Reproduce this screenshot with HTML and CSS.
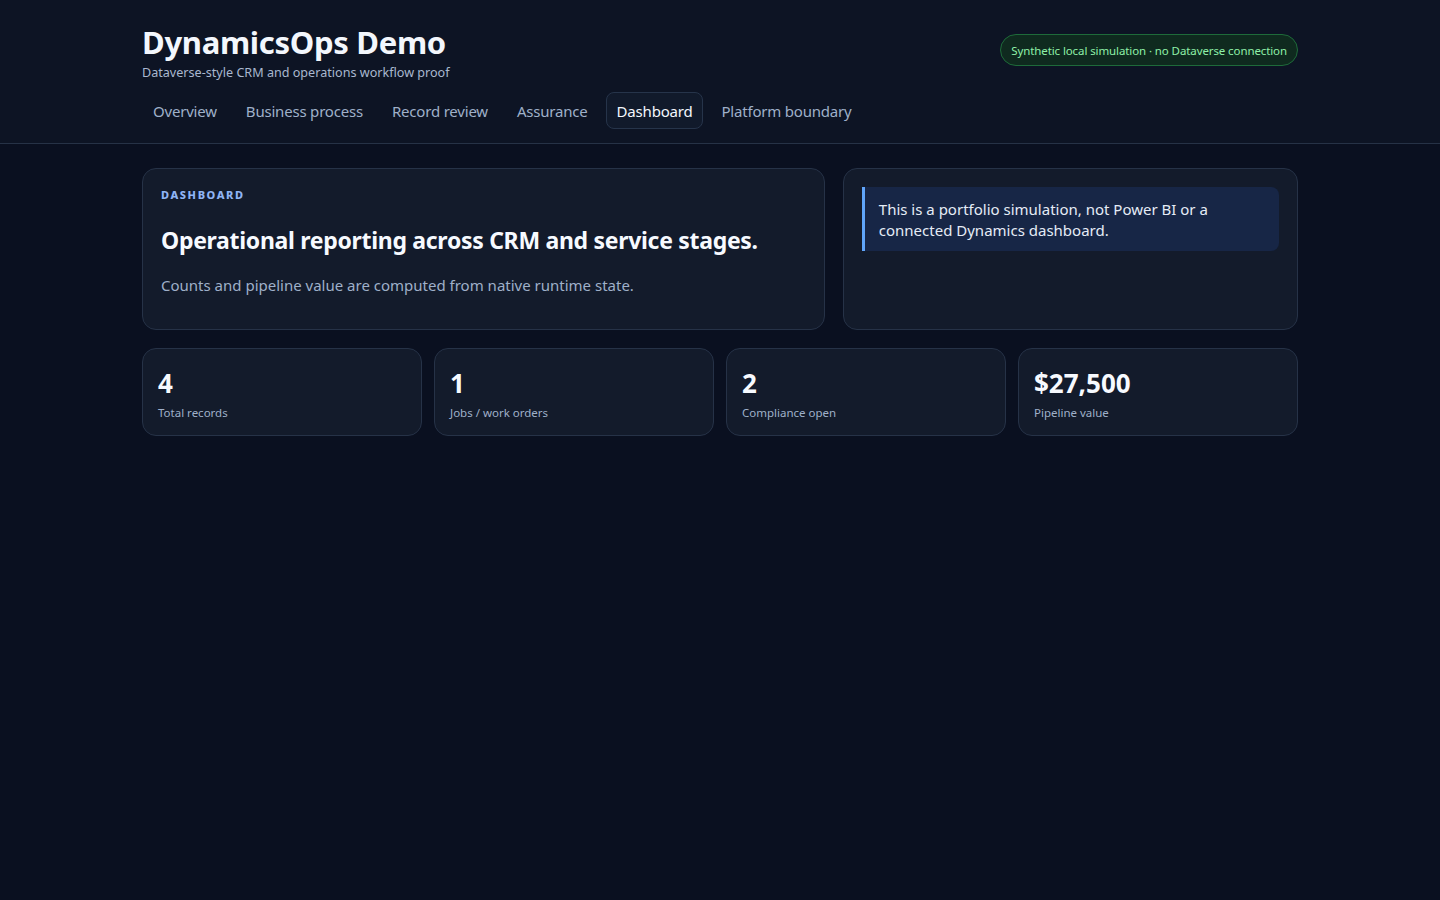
FILE: index.html
```html
<!DOCTYPE html>
<html lang="en">

<head>
  <meta charset="UTF-8">
  <meta name="viewport" content="width=device-width, initial-scale=1.0">
  <title>DynamicsOps Demo</title>
  <link rel="stylesheet" href="styles.css">
</head>

<body>
  <!-- header -->
  <header class="topbar">
    <div class="wrap">
      <div class="brand-row">
        <div class="brand">
          <h1 class="brand-title">DynamicsOps Demo</h1>
          <p class="brand-sub">Dataverse-style CRM and operations workflow proof</p>
        </div>
        <span class="badge">Synthetic local simulation · no Dataverse connection</span>
      </div>
      <nav class="tabs">
        <a class="tab">Overview</a>
        <a class="tab">Business process</a>
        <a class="tab">Record review</a>
        <a class="tab">Assurance</a>
        <a class="tab active">Dashboard</a>
        <a class="tab">Platform boundary</a>
      </nav>
    </div>
  </header>

  <!-- main -->
  <main class="wrap main">
    <section class="hero-grid">
      <div class="card hero">
        <div class="eyebrow">Dashboard</div>
        <h2 class="hero-title">Operational reporting across CRM and service stages.</h2>
        <p class="hero-text">Counts and pipeline value are computed from native runtime state.</p>
      </div>
      <div class="card side">
        <div class="note">This is a portfolio simulation, not Power BI or a connected Dynamics dashboard.</div>
      </div>
    </section>

    <section class="stats">
      <div class="card stat">
        <div class="stat-value">4</div>
        <div class="stat-label">Total records</div>
      </div>
      <div class="card stat">
        <div class="stat-value">1</div>
        <div class="stat-label">Jobs / work orders</div>
      </div>
      <div class="card stat">
        <div class="stat-value">2</div>
        <div class="stat-label">Compliance open</div>
      </div>
      <div class="card stat">
        <div class="stat-value">$27,500</div>
        <div class="stat-label">Pipeline value</div>
      </div>
    </section>
  </main>
</body>

</html>
```

FILE: styles.css
```css
* {
  margin: 0;
  padding: 0;
  box-sizing: border-box;
}

body {
  font-family: "Noto Sans", "Open Sans", sans-serif;
  background: #0a1020;
  color: #e5ecf6;
  min-height: 100vh;
}

.wrap {
  max-width: 1156px;
  margin: 0 auto;
}

/* header */
.topbar {
  background: #0d1424;
  border-bottom: 1px solid #263246;
}

.brand-row {
  display: flex;
  justify-content: space-between;
  align-items: flex-start;
  padding-top: 22px;
}

.brand-title {
  font-size: 31px;
  font-weight: 700;
  line-height: 40px;
  color: #f3f7fd;
  letter-spacing: -0.3px;
}

.brand-sub {
  font-size: 12.6px;
  color: #a9b8cf;
  line-height: 18px;
  margin-top: 2px;
}

.badge {
  margin-top: 12px;
  height: 32px;
  display: flex;
  align-items: center;
  padding: 0 10px;
  border: 1px solid #1e6b3a;
  border-radius: 999px;
  background: #0f2a1f;
  color: #8ef0a8;
  font-size: 11.5px;
  letter-spacing: -0.1px;
}

.tabs {
  display: flex;
  gap: 7px;
  padding: 10px 0 14px;
}

.tab {
  display: block;
  padding: 1px 10px 0;
  height: 37px;
  line-height: 34px;
  font-size: 15px;
  letter-spacing: -0.2px;
  color: #9fb0c9;
  border: 1px solid transparent;
  border-radius: 8px;
}

.tab.active {
  color: #f3f7fd;
  background: #111a2b;
  border-color: #26344a;
}

/* main */
.main {
  padding-top: 24px;
}

.card {
  background: #131b2b;
  border: 1px solid #263247;
  border-radius: 14px;
}

.hero-grid {
  display: grid;
  grid-template-columns: 3fr 2fr;
  gap: 18px;
}

.hero {
  padding: 18px 18px 32px;
}

.eyebrow {
  font-size: 11px;
  font-weight: 800;
  letter-spacing: 1.6px;
  text-transform: uppercase;
  color: #8fb4f5;
  line-height: 16px;
}

.hero-title {
  font-size: 23px;
  font-weight: 700;
  color: #f7faff;
  line-height: 32px;
  margin-top: 21px;
  letter-spacing: -0.3px;
}

.hero-text {
  font-size: 15px;
  color: #9fb0c9;
  line-height: 24px;
  margin-top: 17px;
}

.side {
  padding: 18px;
}

.note {
  background: #172646;
  border-left: 3px solid #60a5fa;
  border-radius: 0 8px 8px 0;
  padding: 12px 14px 10px;
  font-size: 15px;
  line-height: 21px;
  color: #e5ecf6;
}

.stats {
  display: grid;
  grid-template-columns: repeat(4, 1fr);
  gap: 12px;
  margin-top: 18px;
}

.stat {
  padding: 19px 15px 0;
  height: 88px;
}

.stat-value {
  font-size: 26px;
  font-weight: 700;
  line-height: 30px;
  color: #f7faff;
}

.stat-label {
  font-size: 11.5px;
  color: #9fb0c9;
  line-height: 18px;
  margin-top: 6px;
}
```
